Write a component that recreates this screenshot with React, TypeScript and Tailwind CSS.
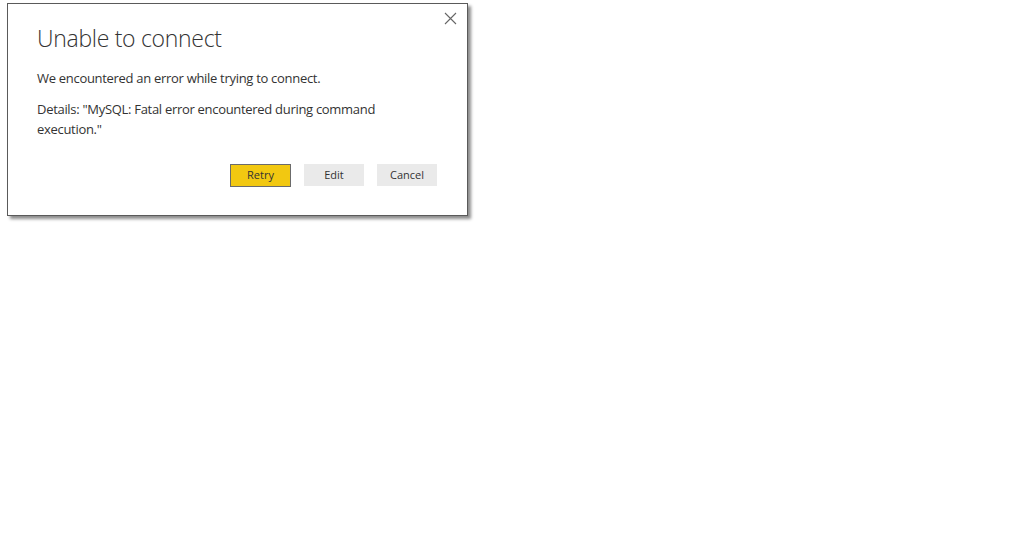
export default function App() {
  return (
    <div className="w-[1030px] h-[542px] bg-white relative" style={{ fontFamily: '"Open Sans", "Noto Sans", sans-serif' }}>
      <div className="absolute left-[7px] top-[3px] w-[461px] h-[213px] bg-white border border-[#5a5a5a] shadow-[3px_3px_3px_rgba(0,0,0,0.45)]">
        <button className="absolute right-[10px] top-[7px] w-[14px] h-[14px] flex items-center justify-center">
          <svg width="13" height="13" viewBox="0 0 13 13" fill="none" stroke="#666" strokeWidth="1.1">
            <path d="M1 1L12 12M12 1L1 12" />
          </svg>
        </button>
        <div className="pl-[29px] pr-[30px] pt-[18px]">
          <h1 className="text-[23px] font-light text-[#333] leading-[32px] tracking-[-0.3px]">Unable to connect</h1>
          <p className="mt-[14px] text-[13px] text-[#333] leading-[20px] tracking-[-0.3px]">We encountered an error while trying to connect.</p>
          <p className="mt-[11px] text-[13px] text-[#333] leading-[20px] tracking-[-0.3px] w-[360px]">
            Details: "MySQL: Fatal error encountered during command execution."
          </p>
          <div className="flex justify-end gap-[13px] mt-[25px]">
            <button className="w-[61px] h-[23px] bg-[#f2c811] border border-[#6b6b6b] text-[11px] text-[#333]">Retry</button>
            <button className="w-[60px] h-[22px] bg-[#eaeaea] text-[11px] text-[#333]">Edit</button>
            <button className="w-[60px] h-[22px] bg-[#eaeaea] text-[11px] text-[#333]">Cancel</button>
          </div>
        </div>
      </div>
    </div>
  );
}
